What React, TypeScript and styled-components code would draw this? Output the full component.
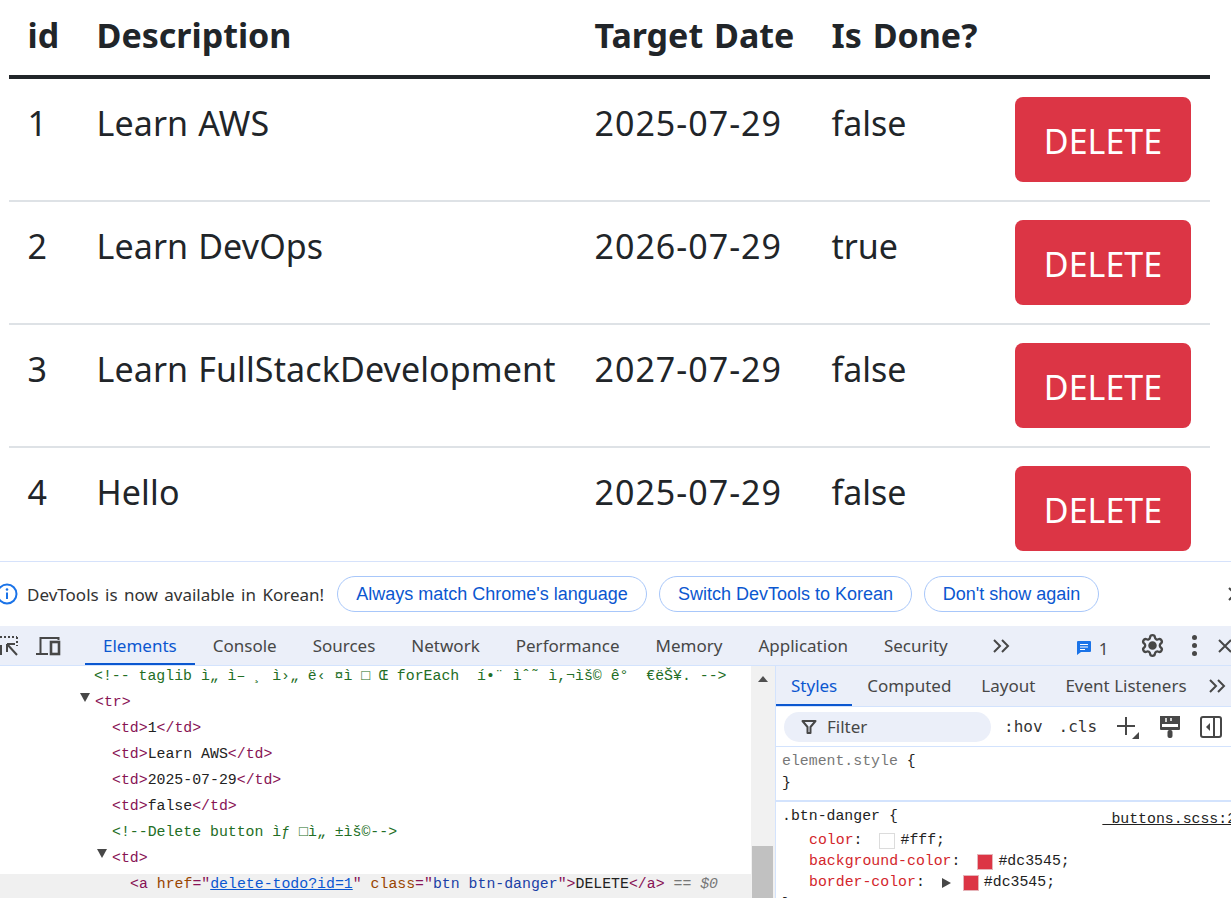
import styled, { createGlobalStyle } from "styled-components";
import { Settings } from "lucide-react";

const todos = [
	{ id: 1, description: "Learn AWS", date: "2025-07-29", done: "false" },
	{ id: 2, description: "Learn DevOps", date: "2026-07-29", done: "true" },
	{ id: 3, description: "Learn FullStackDevelopment", date: "2027-07-29", done: "false" },
	{ id: 4, description: "Hello", date: "2025-07-29", done: "false" },
];

const mainTabs = ["Elements", "Console", "Sources", "Network", "Performance", "Memory", "Application", "Security"];
const sideTabs = ["Styles", "Computed", "Layout", "Event Listeners"];

const Chevrons = () => (
	<svg width="20" height="16" viewBox="0 0 20 16" fill="none" stroke="#474747" strokeWidth="2">
		<path d="M2 2l6 6-6 6M10 2l6 6-6 6" />
	</svg>
);

const App = () => {
	return (
		<>
			<GlobalStyle />
			<Page>
				<TableArea>
					<TableGrid>
						<HeadCell>id</HeadCell>
						<HeadCell>Description</HeadCell>
						<HeadCell>Target Date</HeadCell>
						<HeadCell>Is Done?</HeadCell>
						<HeadCell />
					</TableGrid>
					{todos.map((todo) => (
						<TableGrid key={todo.id} $row>
							<Cell>{todo.id}</Cell>
							<DescriptionCell>{todo.description}</DescriptionCell>
							<DateCell>{todo.date}</DateCell>
							<Cell>{todo.done}</Cell>
							<Cell>
								<DeleteButton>DELETE</DeleteButton>
							</Cell>
						</TableGrid>
					))}
				</TableArea>

				<DevTools>
					<InfoBar>
						<svg width="22" height="22" viewBox="0 0 22 22" fill="none">
							<circle cx="11" cy="11" r="9.5" stroke="#1a73e8" strokeWidth="2" />
							<path d="M11 9.5v6.5" stroke="#1a73e8" strokeWidth="2" />
							<circle cx="11" cy="6.5" r="1.3" fill="#1a73e8" />
						</svg>
						<InfoText>DevTools is now available in Korean!</InfoText>
						<Chip $width={310}>Always match Chrome's language</Chip>
						<Chip $width={253}>Switch DevTools to Korean</Chip>
						<Chip $width={175}>Don't show again</Chip>
						<CloseSlot>
							<svg width="14" height="16" viewBox="0 0 14 16" fill="none" stroke="#474747" strokeWidth="2">
								<path d="M2 2l12 12M14 2L2 14" />
							</svg>
						</CloseSlot>
					</InfoBar>

					<MainToolbar>
						<ToolIcons>
							<svg width="18" height="22" viewBox="0 0 18 22" fill="none" stroke="#474747" strokeWidth="2">
								<path d="M0 2h17M17 2v9" strokeDasharray="2 2" />
								<path d="M7 9l10 11M7 9h8M7 9v8" />
								<path d="M1 10v10" />
							</svg>
							<svg width="25" height="20" viewBox="0 0 25 20" fill="none" stroke="#474747" strokeWidth="2">
								<path d="M0 18h12M4.5 18V2h18v2" />
								<rect x="15" y="6" width="8" height="12" strokeWidth="2.6" />
							</svg>
						</ToolIcons>
						<ToolDivider />
						{mainTabs.map((tab, i) => (
							<MainTab key={tab} $active={i === 0}>
								{tab}
							</MainTab>
						))}
						<MoreSlot>
							<Chevrons />
						</MoreSlot>
						<IssueBadge>
							<svg width="16" height="16" viewBox="0 0 16 16">
								<path d="M2 1h12a1 1 0 0 1 1 1v9a1 1 0 0 1-1 1H5l-4 3V2a1 1 0 0 1 1-1z" fill="#1a73e8" />
								<path d="M4 4.5h8M4 7h8M4 9.5h5" stroke="#fff" strokeWidth="1.2" />
							</svg>
							<span>1</span>
						</IssueBadge>
						<ToolDividerRight />
						<GearSlot>
							<Settings size={25} color="#474747" strokeWidth={2.2} />
						</GearSlot>
						<DotsSlot>
							<Dot />
							<Dot />
							<Dot />
						</DotsSlot>
						<CloseSlotSmall>
							<svg width="14" height="16" viewBox="0 0 14 16" fill="none" stroke="#474747" strokeWidth="2">
								<path d="M2 2l12 12M14 2L2 14" />
							</svg>
						</CloseSlotSmall>
					</MainToolbar>

					<Panels>
						<ElementsPane>
							<CodeLine $indent={94}>
								<CommentText>{"<!-- taglib ì„ ì– ¸ ì›„ ë‹ ¤ì □ Œ forEach  í•¨ ìˆ˜ ì,¬ìš© ê°  €ëŠ¥. -->"}</CommentText>
							</CodeLine>
							<CodeLine $indent={80}>
								<Arrow />
								<Tag>{"<tr>"}</Tag>
							</CodeLine>
							<CodeLine $indent={112}>
								<Tag>{"<td>"}</Tag>1<Tag>{"</td>"}</Tag>
							</CodeLine>
							<CodeLine $indent={112}>
								<Tag>{"<td>"}</Tag>Learn AWS<Tag>{"</td>"}</Tag>
							</CodeLine>
							<CodeLine $indent={112}>
								<Tag>{"<td>"}</Tag>2025-07-29<Tag>{"</td>"}</Tag>
							</CodeLine>
							<CodeLine $indent={112}>
								<Tag>{"<td>"}</Tag>false<Tag>{"</td>"}</Tag>
							</CodeLine>
							<CodeLine $indent={112}>
								<CommentText>{"<!--Delete button ìƒ □ì„ ±ìš©-->"}</CommentText>
							</CodeLine>
							<CodeLine $indent={97}>
								<Arrow />
								<Tag>{"<td>"}</Tag>
							</CodeLine>
							<CodeLine $indent={130} $selected>
								<Tag>{"<a "}</Tag>
								<AttrName>href</AttrName>
								<Tag>="</Tag>
								<AttrLink>delete-todo?id=1</AttrLink>
								<Tag>" </Tag>
								<AttrName>class</AttrName>
								<Tag>="</Tag>
								<AttrValue>btn btn-danger</AttrValue>
								<Tag>"&gt;</Tag>
								DELETE
								<Tag>{"</a>"}</Tag>
								<DollarZero> == $0</DollarZero>
							</CodeLine>
						</ElementsPane>

						<ScrollTrack>
							<ScrollArrow />
							<ScrollThumb />
						</ScrollTrack>

						<SidePane>
							<SideTabs>
								{sideTabs.map((tab, i) => (
									<SideTab key={tab} $active={i === 0}>
										{tab}
									</SideTab>
								))}
								<SideMore>
									<Chevrons />
								</SideMore>
							</SideTabs>

							<FilterRow>
								<FilterPill>
									<svg width="16" height="16" viewBox="0 0 16 16" fill="none" stroke="#474747" strokeWidth="2">
										<path d="M1.5 2h13L9.5 8v6h-3V8z" strokeLinejoin="round" />
									</svg>
									<span>Filter</span>
								</FilterPill>
								<MonoAction>:hov</MonoAction>
								<MonoAction $tail>.cls</MonoAction>
								<svg width="24" height="26" viewBox="0 0 24 26" fill="none">
									<path d="M11 3v18M2 12h18" stroke="#474747" strokeWidth="2" />
									<path d="M24 18v7h-7z" fill="#474747" />
								</svg>
								<svg width="25" height="24" viewBox="0 0 25 24" fill="none">
									<path d="M3 1h20v13a1 1 0 0 1-1 1H4a1 1 0 0 1-1-1z" fill="#474747" />
									<path d="M5 9h16v3H5z" fill="#fff" />
									<path d="M9 3v4M14 3v3" stroke="#fff" strokeWidth="1.5" />
									<rect x="10.5" y="15" width="5" height="8" rx="2" fill="#474747" />
								</svg>
								<svg width="22" height="22" viewBox="0 0 22 22" fill="none">
									<rect x="1" y="1" width="20" height="20" rx="2" stroke="#474747" strokeWidth="2" />
									<path d="M14 1v20" stroke="#474747" strokeWidth="2" />
									<path d="M10 7v8l-4-4z" fill="#474747" />
								</svg>
							</FilterRow>

							<RuleBlock>
								<RuleLine $muted>
									element.style <Plain>{"{"}</Plain>
								</RuleLine>
								<RuleLine>{"}"}</RuleLine>
							</RuleBlock>

							<RuleBlock $last>
								<SelectorLine>
									<span>{".btn-danger {"}</span>
									<SourceLink>_buttons.scss:2:</SourceLink>
								</SelectorLine>
								<PropLine>
									<PropName>color</PropName>:
									<Swatch $color="#ffffff" />
									#fff;
								</PropLine>
								<PropLine>
									<PropName>background-color</PropName>:
									<Swatch $color="#dc3545" />
									#dc3545;
								</PropLine>
								<PropLine>
									<PropName>border-color</PropName>:
									<SmallArrow />
									<Swatch $color="#dc3545" $tight />
									#dc3545;
								</PropLine>
								<RuleLine>{"}"}</RuleLine>
							</RuleBlock>
						</SidePane>
					</Panels>
				</DevTools>
			</Page>
		</>
	);
};

const GlobalStyle = createGlobalStyle`
	html, body {
		margin: 0;
		height: 100%;
		overflow: hidden;
		background: #fff;
	}
`;

const uiFont = `"Noto Sans", "Open Sans", sans-serif`;
const monoFont = `"Liberation Mono", "DejaVu Sans Mono", monospace`;

const Page = styled.div`
	width: 1231px;
	height: 898px;
	display: flex;
	flex-direction: column;
	overflow: hidden;
	font-family: ${uiFont};
`;

const TableArea = styled.div`
	height: 561px;
	flex: none;
	padding: 0 21px 0 9px;
	box-sizing: border-box;
	overflow: hidden;
	color: #212529;
`;

const TableGrid = styled.div<{ $row?: boolean }>`
	display: grid;
	grid-template-columns: 69px 498px 237px 183px 214px;
	height: ${({ $row }) => ($row ? "123px" : "79px")};
	box-sizing: border-box;
	border-bottom: ${({ $row }) => ($row ? "2px solid #dee2e6" : "4px solid #212529")};
	&:last-child {
		border-bottom: 0;
	}
`;

const HeadCell = styled.div`
	padding: 8px 0 0 18.5px;
	font-size: 34px;
	line-height: 54px;
	font-weight: 700;
	word-spacing: 2px;
	white-space: nowrap;
`;

const Cell = styled.div`
	padding: 17px 0 0 18.5px;
	font-size: 34px;
	line-height: 54px;
	white-space: nowrap;
`;

const DescriptionCell = styled(Cell)`
	word-spacing: 1px;
	letter-spacing: 0.12px;
`;

const DateCell = styled(Cell)`
	letter-spacing: 1px;
`;

const DeleteButton = styled.div`
	width: 176px;
	height: 85px;
	margin: 1px 0 0 0.5px;
	padding-top: 2px;
	box-sizing: border-box;
	display: flex;
	align-items: center;
	justify-content: center;
	background: #dc3545;
	color: #fff;
	border-radius: 8px;
	font-size: 34px;
`;

const DevTools = styled.div`
	flex: 1;
	min-height: 0;
	display: flex;
	flex-direction: column;
	border-top: 1px solid #d6e2fb;
	color: #1f1f1f;
`;

const InfoBar = styled.div`
	height: 64px;
	flex: none;
	display: flex;
	align-items: center;
	margin-left: -4px;
	box-sizing: border-box;
	white-space: nowrap;
`;

const InfoText = styled.span`
	width: 298px;
	margin: 0 12px 0 9px;
	font-size: 17px;
	word-spacing: 2px;
	color: #333;
`;

const Chip = styled.div<{ $width: number }>`
	width: ${({ $width }) => $width}px;
	height: 36px;
	box-sizing: border-box;
	margin-right: 12px;
	border: 1px solid #a8c7fa;
	border-radius: 18px;
	display: flex;
	align-items: center;
	justify-content: center;
	color: #0b57d0;
	font-family: "Liberation Sans", Arial, sans-serif;
	font-size: 18px;
`;

const CloseSlot = styled.div`
	margin-left: auto;
	margin-right: -10px;
	display: flex;
`;

const MainToolbar = styled.div`
	height: 40px;
	flex: none;
	display: flex;
	align-items: center;
	background: #ebeff9;
	border-bottom: 1px solid #d3e3fd;
	box-sizing: border-box;
	white-space: nowrap;
	overflow: hidden;
`;

const ToolIcons = styled.div`
	display: flex;
	align-items: center;
	gap: 18px;
`;

const ToolDivider = styled.div`
	width: 1px;
	height: 28px;
	margin: 0 9px 0 15px;
	background: #d3e3fd;
`;

const MainTab = styled.div<{ $active?: boolean }>`
	height: 100%;
	box-sizing: border-box;
	padding: 2px 18px 0;
	display: flex;
	align-items: center;
	font-size: 17px;
	color: ${({ $active }) => ($active ? "#0b57d0" : "#474747")};
	border-bottom: 2px solid ${({ $active }) => ($active ? "#0b57d0" : "transparent")};
`;

const MoreSlot = styled.div`
	margin-left: 26px;
	display: flex;
`;

const IssueBadge = styled.div`
	margin-left: 64px;
	display: flex;
	align-items: center;
	gap: 7px;
	font-size: 17px;
	color: #474747;
	svg {
		margin-top: 4px;
	}
	span {
		padding-top: 5px;
	}
`;

const ToolDividerRight = styled.div`
	width: 1px;
	height: 28px;
	margin: 0 15px 0 17px;
	background: #d3e3fd;
`;

const GearSlot = styled.div`
	display: flex;
	svg circle {
		fill: #474747;
	}
`;

const DotsSlot = styled.div`
	margin-left: 27px;
	display: flex;
	flex-direction: column;
	gap: 3px;
`;

const Dot = styled.div`
	width: 5px;
	height: 5px;
	border-radius: 50%;
	background: #474747;
`;

const CloseSlotSmall = styled.div`
	margin-left: 20px;
	display: flex;
`;

const Panels = styled.div`
	flex: 1;
	min-height: 0;
	display: flex;
`;

const ElementsPane = styled.div`
	width: 751px;
	flex: none;
	overflow: hidden;
	font-family: ${monoFont};
	font-size: 14.85px;
	color: #222;
`;

const CodeLine = styled.div<{ $indent: number; $selected?: boolean }>`
	height: 26px;
	line-height: 20px;
	padding-left: ${({ $indent }) => $indent}px;
	white-space: pre;
	background: ${({ $selected }) => ($selected ? "#f0f0f0" : "transparent")};
`;

const CommentText = styled.span`
	color: #236e25;
`;

const Tag = styled.span`
	color: #881355;
`;

const AttrName = styled.span`
	color: #994500;
`;

const AttrLink = styled.span`
	color: #0b57d0;
	text-decoration: underline;
`;

const AttrValue = styled.span`
	color: #1a3fa6;
`;

const DollarZero = styled.span`
	color: #777;
	font-style: italic;
`;

const Arrow = styled.span`
	display: inline-block;
	width: 0;
	height: 0;
	margin-right: 5px;
	border-left: 5.5px solid transparent;
	border-right: 5.5px solid transparent;
	border-top: 9px solid #474747;
	vertical-align: 4px;
`;

const ScrollTrack = styled.div`
	width: 25px;
	flex: none;
	display: flex;
	flex-direction: column;
	justify-content: space-between;
	align-items: center;
	padding: 10px 1px 0 0;
	box-sizing: border-box;
	background: #f1f1f1;
	border-right: 1px solid #d3e3fd;
`;

const ScrollArrow = styled.div`
	width: 0;
	height: 0;
	border-left: 5.5px solid transparent;
	border-right: 5.5px solid transparent;
	border-bottom: 6px solid #505050;
`;

const ScrollThumb = styled.div`
	width: 21px;
	height: 52px;
	background: #c1c1c1;
`;

const SidePane = styled.div`
	flex: 1;
	min-width: 0;
	overflow: hidden;
	font-family: ${monoFont};
	font-size: 14.85px;
`;

const SideTabs = styled.div`
	height: 41px;
	display: flex;
	align-items: center;
	background: #ebeff9;
	border-bottom: 1px solid #d3e3fd;
	box-sizing: border-box;
	white-space: nowrap;
	font-family: ${uiFont};
`;

const SideTab = styled.div<{ $active?: boolean }>`
	height: 100%;
	box-sizing: border-box;
	padding: 0 15px;
	display: flex;
	align-items: center;
	font-size: 17px;
	color: ${({ $active }) => ($active ? "#0b57d0" : "#474747")};
	border-bottom: 2px solid ${({ $active }) => ($active ? "#0b57d0" : "transparent")};
`;

const SideMore = styled.div`
	margin-left: 6px;
	display: flex;
`;

const FilterRow = styled.div`
	height: 39px;
	display: flex;
	align-items: center;
	gap: 18px;
	padding-left: 8px;
	border-bottom: 1px solid #d3e3fd;
	box-sizing: content-box;
`;

const FilterPill = styled.div`
	width: 207px;
	height: 30px;
	flex: none;
	box-sizing: border-box;
	margin-right: -5px;
	padding-left: 17px;
	border-radius: 15px;
	background: #ebeff9;
	display: flex;
	align-items: center;
	gap: 10px;
	font-family: ${uiFont};
	font-size: 17px;
	color: #474747;
`;

const MonoAction = styled.span<{ $tail?: boolean }>`
	font-family: "DejaVu Sans Mono", monospace;
	font-size: 16px;
	color: #333;
	margin-right: ${({ $tail }) => ($tail ? "0" : "-2px")};
`;

const RuleBlock = styled.div<{ $last?: boolean }>`
	padding: 3px 0 0 6px;
	height: ${({ $last }) => ($last ? "auto" : "55px")};
	box-sizing: border-box;
	border-bottom: ${({ $last }) => ($last ? "0" : "2px solid #d3e3fd")};
`;

const RuleLine = styled.div<{ $muted?: boolean }>`
	height: 22px;
	line-height: 22px;
	color: ${({ $muted }) => ($muted ? "#777" : "#222")};
`;

const Plain = styled.span`
	color: #222;
`;

const SelectorLine = styled.div`
	height: 23px;
	line-height: 23px;
	margin: 0 -14px 2px 0;
	display: flex;
	justify-content: space-between;
	color: #222;
	white-space: nowrap;
`;

const SourceLink = styled.span`
	text-decoration: underline;
	margin-top: 3px;
`;

const PropLine = styled.div`
	height: 21px;
	line-height: 21px;
	padding-left: 27px;
	display: flex;
	align-items: center;
	color: #222;
	white-space: pre;
`;

const PropName = styled.span`
	color: #d3262c;
`;

const Swatch = styled.span<{ $color: string; $tight?: boolean }>`
	width: 14px;
	height: 14px;
	margin: 0 ${({ $tight }) => ($tight ? "5px 0 5px" : "5px 0 17px")};
	box-sizing: content-box;
	background: ${({ $color }) => $color};
	border: 1px solid ${({ $color }) => ($color === "#ffffff" ? "#dcdcdc" : "#e6b5ba")};
`;

const SmallArrow = styled.span`
	width: 0;
	height: 0;
	margin-left: 17px;
	margin-right: 7px;
	border-top: 5.5px solid transparent;
	border-bottom: 5.5px solid transparent;
	border-left: 9px solid #474747;
`;

export default App;
